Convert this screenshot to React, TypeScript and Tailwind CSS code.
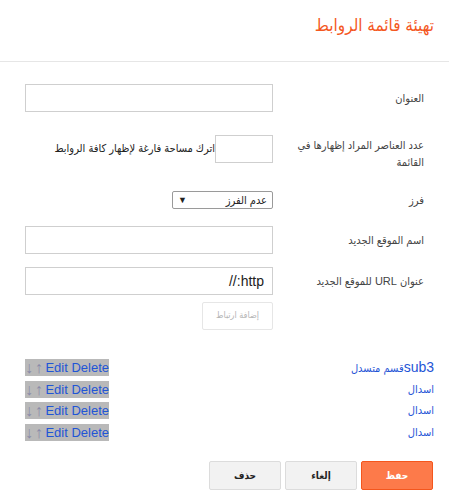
import React from "react";

const font = { fontFamily: '"Liberation Sans", Arial, "DejaVu Sans Condensed", "DejaVu Sans", sans-serif' };
const arrowFont = { fontFamily: '"Liberation Sans", Arial, sans-serif' };

function ListRow({ label }: { label: React.ReactNode }) {
  return (
    <div className="flex items-center justify-between h-[21.5px]">
      <div className="text-[11px] leading-[15px]">{label}</div>
      <div dir="ltr" className="bg-[#b9b9b9] h-[17px] w-[84px] flex items-center text-[13px] leading-[17px] whitespace-nowrap overflow-hidden">
        <span className="text-[#8a8aa8] w-[10px] text-[16px] leading-[17px] text-left" style={arrowFont}>↓</span>
        <span className="text-[#8a8aa8] w-[11px] text-[16px] leading-[17px] text-left" style={arrowFont}>↑</span>
        <span className="text-[#1f55d6]">Edit Delete</span>
      </div>
    </div>
  );
}

export default function App() {
  return (
    <div dir="rtl" className="w-[449px] h-[499px] bg-white text-[#222]" style={font}>
      <div className="h-[62px] border-b border-[#e6e6e6] px-[15px] flex items-start pt-[15px]">
        <h1 className="text-[17px] leading-[22px] text-[#f4581f] font-normal">تهيئة قائمة الروابط</h1>
      </div>

      <div className="px-[25px] pt-[22px]">
        <div className="flex items-center">
          <label className="w-[151px] text-[11px] text-[#444]">العنوان</label>
          <input className="w-[248px] h-[28px] border border-[#cfcfcf] outline-none" />
        </div>

        <div className="flex items-start mt-[23px]">
          <label className="w-[151px] text-[11px] leading-[17px] text-[#444] pt-[2px]">عدد العناصر المراد إظهارها في القائمة</label>
          <input className="w-[58px] h-[28px] border border-[#cfcfcf] outline-none" />
          <span className="text-[11px] leading-[17px] text-[#222] pt-[5px] whitespace-nowrap">اترك مساحة فارغة لإظهار كافة الروابط</span>
        </div>

        <div className="flex items-center mt-[20px]">
          <label className="w-[151px] text-[11px] text-[#444]">فرز</label>
          <div className="w-[101px] h-[18px] border border-[#9a9a9a] rounded-[2px] flex items-center justify-between px-[5px] text-[11px] leading-[16px]">
            <span>عدم الفرز</span>
            <span className="text-[9px]">▼</span>
          </div>
        </div>

        <div className="flex items-center mt-[17px]">
          <label className="w-[151px] text-[11px] text-[#444]">اسم الموقع الجديد</label>
          <input className="w-[248px] h-[28px] border border-[#cfcfcf] outline-none" />
        </div>

        <div className="flex items-center mt-[13px]">
          <label className="w-[151px] text-[11px] text-[#444]">عنوان URL للموقع الجديد</label>
          <input defaultValue="http://" className="w-[248px] h-[28px] border border-[#cfcfcf] outline-none px-[8px] text-[14px] text-[#222]" />
        </div>

        <div className="flex mt-[7px] pr-[151px]">
          <button className="w-[71px] h-[28px] border border-[#e6e6e6] rounded-[2px] bg-white text-[9px] text-[#b5b5b5]">إضافة ارتباط</button>
        </div>
      </div>

      <div className="pl-[25px] pr-[15px] mt-[27px]">
        <ListRow label={<a className="text-[#1f55d6]"><span className="text-[14px]">sub3</span>قسم متسدل</a>} />
        <ListRow label={<a className="text-[#1f55d6]">اسدال</a>} />
        <ListRow label={<a className="text-[#1f55d6]">اسدال</a>} />
        <ListRow label={<a className="text-[#1f55d6]">اسدال</a>} />
      </div>

      <div className="flex gap-[4px] px-[16px] mt-[18px]">
        <button className="w-[72px] h-[29px] bg-[#fd7a4a] border border-[#f4561d] rounded-[2px] text-white text-[10px] font-bold">حفظ</button>
        <button className="w-[72px] h-[29px] bg-[#f2f2f2] border border-[#dcdcdc] rounded-[2px] text-[#222] text-[10px] font-bold">إلغاء</button>
        <button className="w-[72px] h-[29px] bg-[#f2f2f2] border border-[#dcdcdc] rounded-[2px] text-[#222] text-[10px] font-bold">حذف</button>
      </div>
    </div>
  );
}
